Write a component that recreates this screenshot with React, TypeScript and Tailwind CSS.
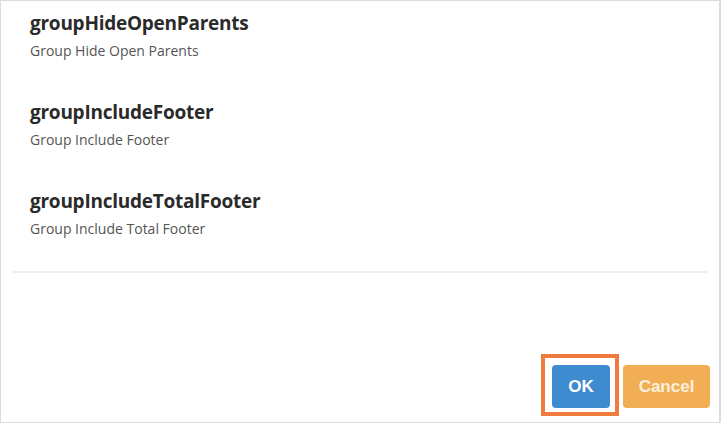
const options = [
  { name: 'groupHideOpenParents', label: 'Group Hide Open Parents' },
  { name: 'groupIncludeFooter', label: 'Group Include Footer' },
  { name: 'groupIncludeTotalFooter', label: 'Group Include Total Footer' },
];

export default function App() {
  return (
    <div className="w-[722px] h-[423px] bg-white overflow-hidden">
      <div className="h-full flex flex-col border-t border-l border-r-2 border-b border-[#dcdcdc] mr-[1px]">
        {/* Option list */}
        <div className="px-[11px]">
          <div className="pl-[18px] pt-[10px] pb-[33px] flex flex-col gap-[40px] font-['Open_Sans',sans-serif]">
            {options.map((opt) => (
              <div key={opt.name}>
                <div className="text-[19px] leading-[24px] font-bold text-[#2a2a2a] tracking-[-0.25px]">{opt.name}</div>
                <div className="mt-[6px] text-[14px] leading-[19px] text-[#555]">{opt.label}</div>
              </div>
            ))}
          </div>
          <div className="h-[2px] bg-[#f0f0f0]" />
        </div>

        {/* Footer buttons */}
        <div className="mt-auto flex justify-end items-start gap-[4px] pr-[9px] pb-[6px] font-['Liberation_Sans',sans-serif]">
          <div className="border-4 border-[#f07b3f] pt-[7px] pb-[4px] pl-[7px] pr-[5px]">
            <button className="w-[58px] h-[43px] rounded-[4px] bg-[#3f8bd0] text-white text-[17px] font-bold">
              OK
            </button>
          </div>
          <button className="w-[87px] h-[43px] mt-[11px] rounded-[4px] bg-[#f2ae55] text-[#fdf0de] text-[17px] font-bold">
            Cancel
          </button>
        </div>
      </div>
    </div>
  );
}
